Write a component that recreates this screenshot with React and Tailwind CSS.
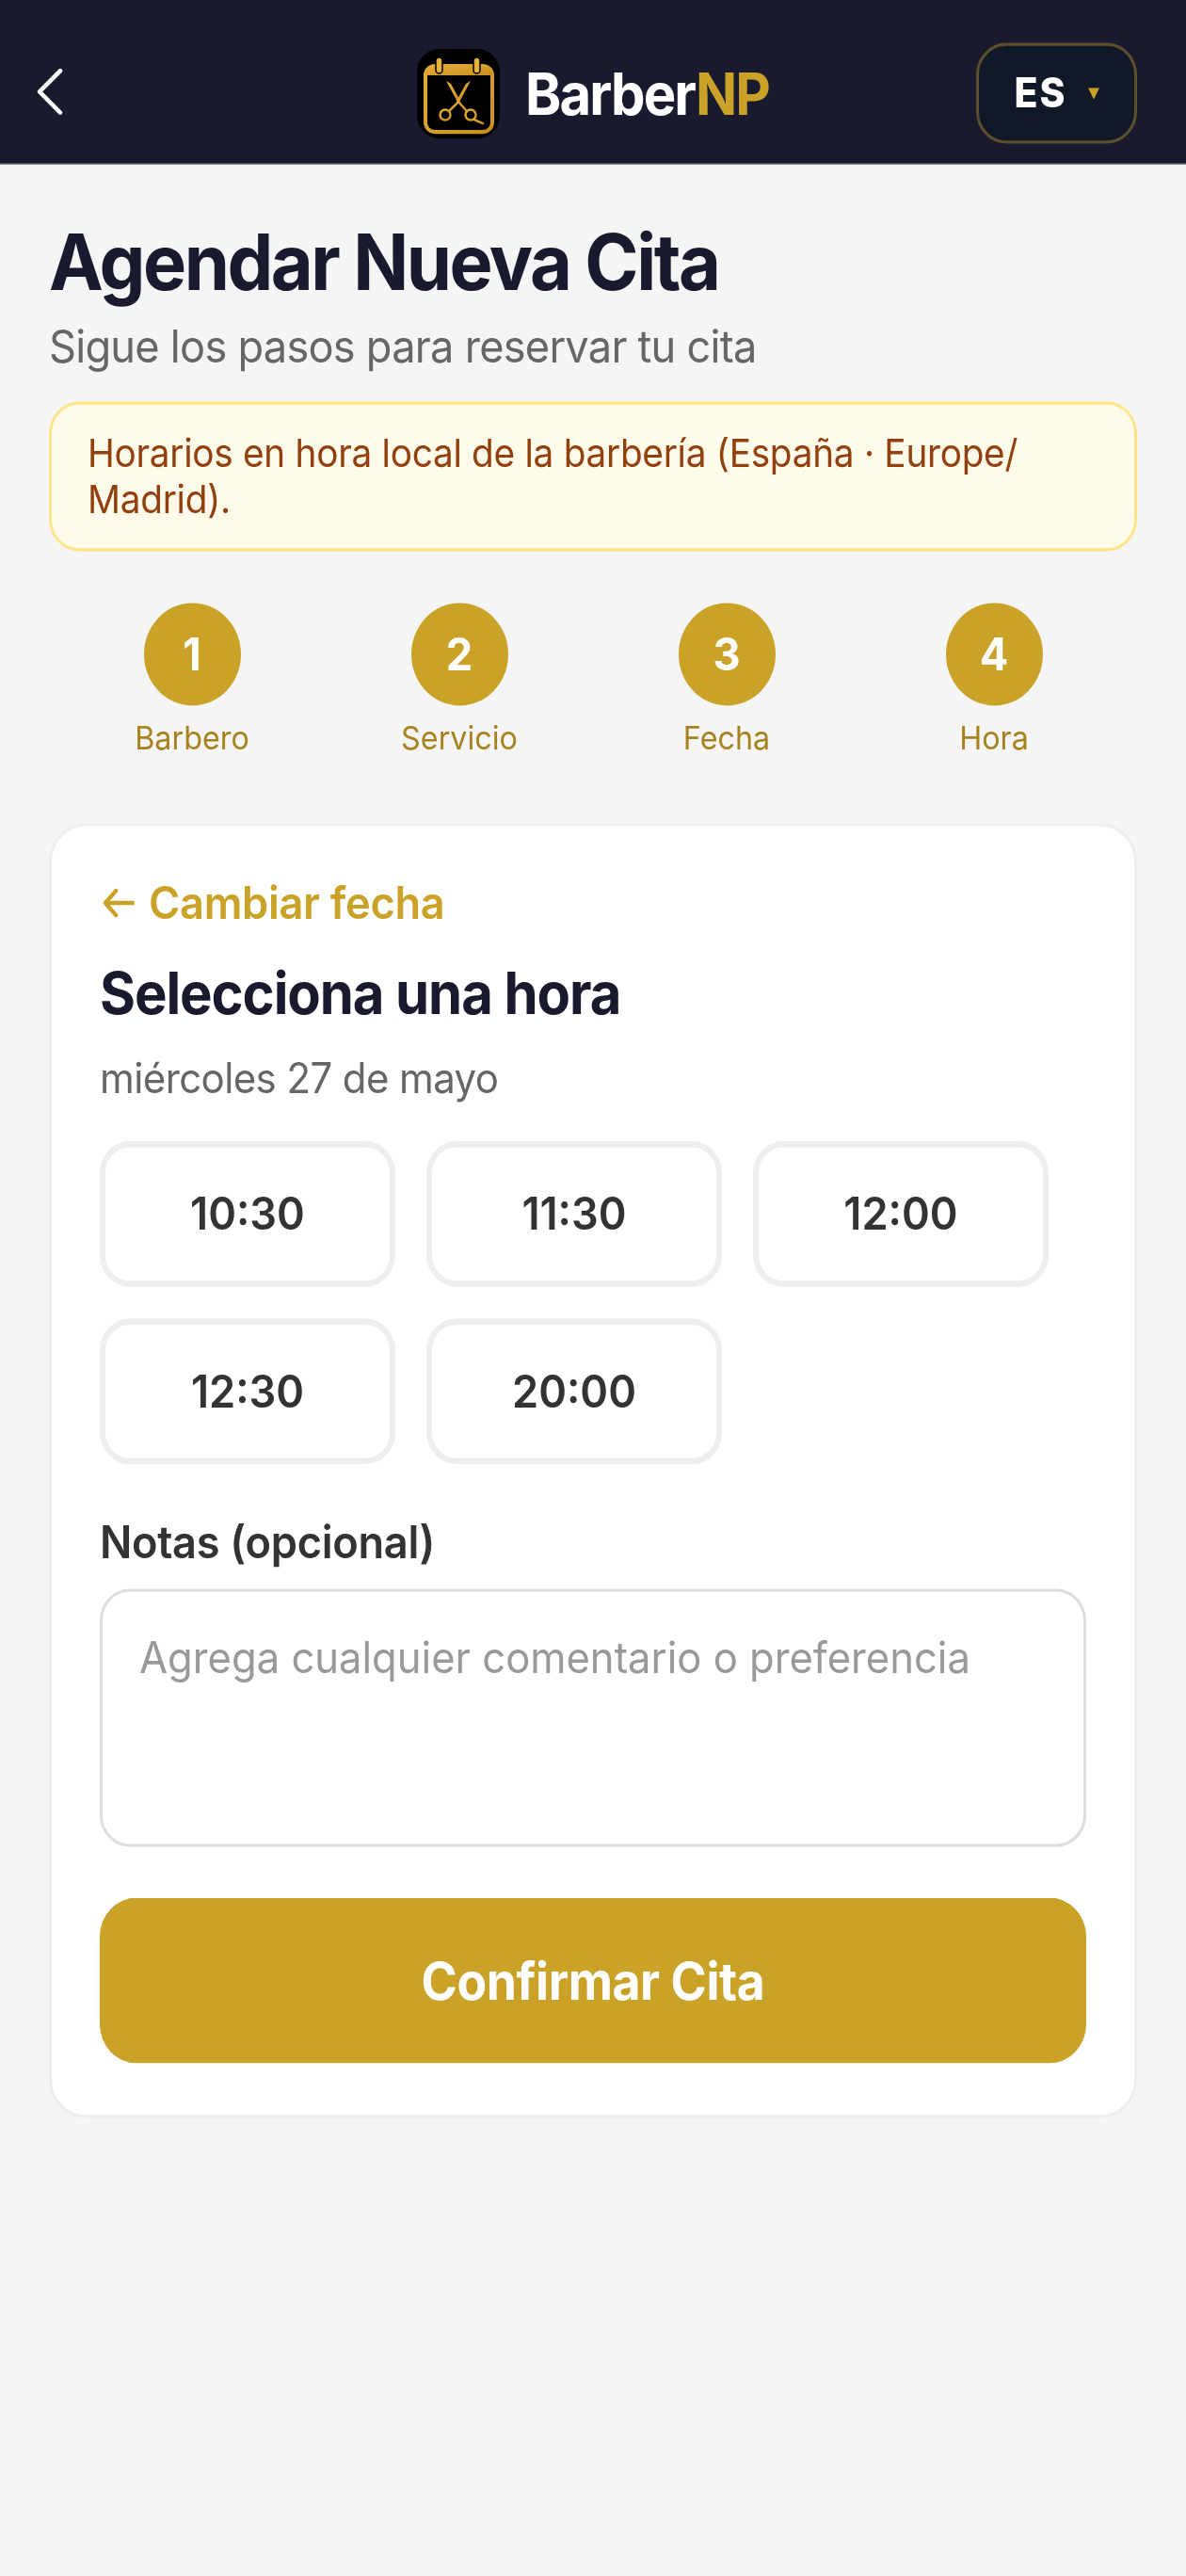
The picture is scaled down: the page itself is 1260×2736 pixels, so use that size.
import React from 'react'

const steps = [
  { n: 1, label: 'Barbero' },
  { n: 2, label: 'Servicio' },
  { n: 3, label: 'Fecha' },
  { n: 4, label: 'Hora' },
]

const times = ['10:30', '11:30', '12:00', '12:30', '20:00']

const Logo = () => (
  <svg width="88" height="90" viewBox="0 0 88 95" preserveAspectRatio="none" fill="none">
    <defs>
      <linearGradient id="gold" x1="0" y1="0" x2="1" y2="1">
        <stop offset="0" stopColor="#e3b038" />
        <stop offset="1" stopColor="#c98f1e" />
      </linearGradient>
    </defs>
    <rect width="88" height="95" rx="24" fill="#000" />
    <rect x="9" y="18" width="71" height="70" rx="10" stroke="url(#gold)" strokeWidth="4" />
    <path d="M9 28 V26 a9 9 0 0 1 9 -9 H71 a9 9 0 0 1 9 9 V28 Z" fill="url(#gold)" />
    <rect x="20" y="9" width="7" height="17" rx="3.5" fill="#e3b038" stroke="#000" strokeWidth="1.5" />
    <rect x="60" y="9" width="7" height="17" rx="3.5" fill="#e3b038" stroke="#000" strokeWidth="1.5" />
    <path d="M31 34 L36 37 L46 55 L44 58 Z" fill="url(#gold)" />
    <path d="M57 34 L52 37 L42 55 L44 58 Z" fill="url(#gold)" />
    <path d="M44 56 L34 66 M44 56 L53 66" stroke="url(#gold)" strokeWidth="2.5" />
    <circle cx="30" cy="70" r="5.5" stroke="url(#gold)" strokeWidth="2.5" />
    <circle cx="57" cy="70" r="5.5" stroke="url(#gold)" strokeWidth="2.5" />
    <path d="M61 75 L70 79" stroke="url(#gold)" strokeWidth="2.5" strokeLinecap="round" />
  </svg>
)

const App = () => {
  return (
    <div className="h-[2736px] overflow-hidden bg-[#f5f5f5]">
      {/* the reference is a bit taller than it is wide, so everything is stretched on y */}
      <div className="h-[2585px] origin-top scale-y-[1.0586] font-['Inter',sans-serif]">
        {/* Header */}
        <header className="h-[165px] pt-[23px] bg-[#1a1a2e] border-b border-[#9a9aa5] grid grid-cols-[1fr_auto_1fr] items-center">
          <div className="pl-[39px] mb-[3px]">
            <svg width="28" height="46" viewBox="0 0 28 46" fill="none">
              <path d="M25 2 L3 23 L25 44" stroke="#fff" strokeWidth="4.5" strokeLinecap="round" strokeLinejoin="round" />
            </svg>
          </div>
          <div className="flex items-center gap-[27px]">
            <Logo />
            <div className="text-[58px] font-bold tracking-[-1.9px] text-white leading-none">
              Barber<span className="text-[#c9a227]">NP</span>
            </div>
          </div>
          <div className="flex justify-end pr-[52px]">
            <div className="w-[171px] h-[101px] rounded-[32px] border-[3px] border-[#5c4f2e] bg-[#111827] flex items-center justify-center gap-[22px]">
              <span className="text-[41px] font-extrabold text-white tracking-[2px]">ES</span>
              <svg width="12" height="12" viewBox="0 0 12 12">
                <path d="M0 0 H12 L6 12 Z" fill="#c9a227" />
              </svg>
            </div>
          </div>
        </header>

        <main className="px-[52px] pt-[50px]">
          <h1 className="text-[77.5px] leading-[96px] font-bold tracking-[-2.5px] text-[#1a1a2e]">Agendar Nueva Cita</h1>
          <p className="mt-[9px] text-[45.2px] leading-[56px] tracking-[-0.76px] text-[#666666]">Sigue los pasos para reservar tu cita</p>

          <div className="mt-[27px] h-[150px] rounded-[32px] border-[3px] border-[#fde68a] bg-[#fffbeb] px-[38px] pt-[26px] text-[38.8px] leading-[45.5px] tracking-[-0.3px] text-[#92400e]">
            Horarios en hora local de la barbería (España · Europe/ Madrid).
          </div>

          {/* Steps */}
          <div className="mt-[52px] grid grid-cols-4 px-[10px]">
            {steps.map((s) => (
              <div key={s.n} className="flex flex-col items-center">
                <div className="w-[103px] h-[103px] rounded-full bg-[#c9a227] flex items-center justify-center text-white text-[45.2px] font-bold">
                  {s.n}
                </div>
                <div className="mt-[13px] text-[32.3px] leading-[40px] text-[#a8821f]">{s.label}</div>
              </div>
            ))}
          </div>

          {/* Card */}
          <div className="mt-[65px] h-[1298.5px] rounded-[39px] border-[3px] border-[#eeeeee] bg-white px-[51px] pt-[49px]">
            <div className="flex items-center gap-[15px] text-[#c9a227] text-[45.2px] leading-[56px] tracking-[-0.3px] font-semibold">
              <svg className="ml-[3px]" width="34" height="30" viewBox="0 0 36 32" preserveAspectRatio="none" fill="none">
                <path d="M15 3 L3 16 L15 29 M3 16 H34" stroke="#c9a227" strokeWidth="4.5" strokeLinecap="round" strokeLinejoin="round" />
              </svg>
              Cambiar fecha
            </div>
            <h2 className="mt-[26.5px] text-[58px] leading-[70px] font-bold tracking-[-1.07px] text-[#1a1a2e]">Selecciona una hora</h2>
            <p className="mt-[25.7px] text-[42px] leading-[52px] tracking-[-0.6px] text-[#666666]">miércoles 27 de mayo</p>

            <div className="mt-[37.3px] grid grid-cols-[314px_314px_314px] gap-x-[33px] gap-y-[32.3px]">
              {times.map((t) => (
                <button key={t} className="h-[145.4px] rounded-[32px] border-[6px] border-[#eeeeee] bg-white text-[45.2px] font-semibold text-[#333333]">
                  {t}
                </button>
              ))}
            </div>

            <label className="block mt-[50.4px] text-[45.2px] leading-[56px] tracking-[-0.3px] font-semibold text-[#333333]">Notas (opcional)</label>
            <textarea
              className="block mt-[19.5px] w-full h-[258.5px] rounded-[32px] border-[3px] border-[#dddddd] bg-white px-[39px] pt-[40px] text-[43.6px] leading-[54px] text-[#333333] placeholder:text-[#999999] resize-none outline-none"
              placeholder="Agrega cualquier comentario o preferencia"
            />

            <button className="mt-[51.5px] w-full h-[166px] rounded-[39px] bg-[#c9a227] text-white text-[51.7px] tracking-[-0.4px] font-bold">
              Confirmar Cita
            </button>
          </div>
        </main>
      </div>
    </div>
  )
}

export default App
